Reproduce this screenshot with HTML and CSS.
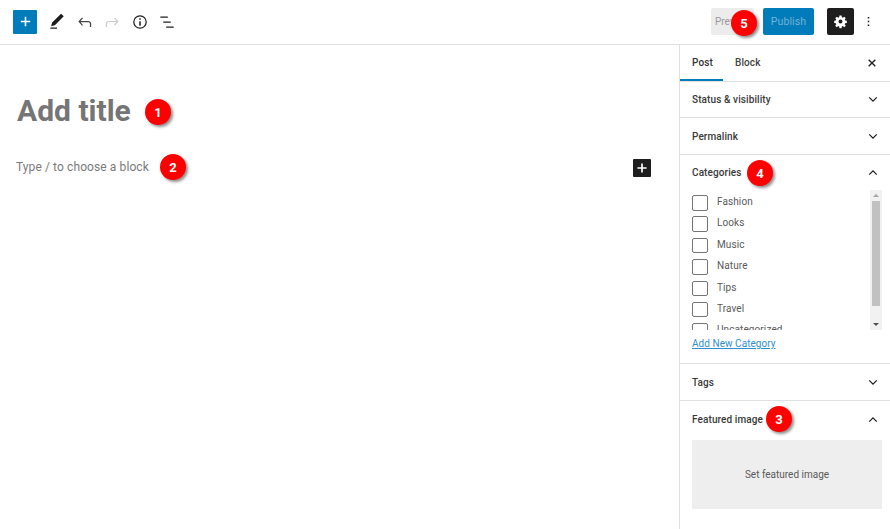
FILE: index.html
```html
<!DOCTYPE html>
<html lang="en">
<head>
<meta charset="utf-8">
<title>Add title</title>
<link rel="stylesheet" href="styles.css">
</head>
<body>
<div class="app">
  <header class="topbar">
    <div class="tools">
      <button class="add-btn" aria-label="Add block"><svg width="11" height="11" viewBox="0 0 14 14"><path d="M6 1h2v5h5v2H8v5H6V8H1V6h5z" fill="#fff"/></svg></button>
      <svg class="tool" width="20" height="20" viewBox="0 0 24 24"><path d="M20.100 5.100 16.900 2 6.200 12.700l-1.300 4.400 4.500-1.300zM4 20.200h8v-1.500H4z" fill="#1e1e1e"/></svg>
      <svg class="tool" width="20" height="20" viewBox="0 0 24 24"><path d="M18.300 11.700c-.6-.6-1.400-.9-2.300-.9H6.700l2.900-3.300-1.100-1-4.500 5L8.500 16.500l1-1-2.700-3.200H16c.5 0 .9.200 1.300.5.400.4.600.9.600 1.500V18h1.500v-3.900c0-1-.4-1.800-1.100-2.400z" fill="#444"/></svg>
      <svg class="tool" width="20" height="20" viewBox="0 0 24 24"><path d="M15.600 6.500l-1.100 1 2.900 3.300H8c-.9 0-1.700.3-2.300.9-.7.600-1.100 1.400-1.100 2.400V18h1.500v-3.900c0-.6.200-1.100.6-1.500.4-.3.800-.5 1.300-.5h9.200l-2.700 3.200 1 1 4.500-5z" fill="#ccc"/></svg>
      <svg class="tool" width="20" height="20" viewBox="0 0 24 24"><path d="M12 3.800a8.200 8.200 0 1 0 0 16.400 8.200 8.200 0 0 0 0-16.400zm0 14.900a6.700 6.700 0 1 1 0-13.400 6.700 6.700 0 0 1 0 13.400zM11.100 11h1.800v5.500h-1.800zm0-3.500h1.800v1.800h-1.800z" fill="#1e1e1e"/></svg>
      <svg class="tool" width="20" height="20" viewBox="0 0 24 24"><path d="M4 5.500h9V7H4zM7.500 11.500h9V13h-9zM11 17.500h9V19h-9z" fill="#1e1e1e"/></svg>
    </div>
    <div class="actions">
      <button class="preview">Preview</button>
      <button class="publish">Publish</button>
      <button class="settings" aria-label="Settings"><svg width="15" height="15" viewBox="0 0 24 24"><path fill="#fff" fill-rule="evenodd" d="M10.300 2.500h3.400l.5 2.700 1.500.6 2.300-1.600 2.400 2.400-1.600 2.300.6 1.500 2.700.5v3.400l-2.700.5-.6 1.500 1.600 2.300-2.400 2.400-2.300-1.600-1.500.6-.5 2.700h-3.400l-.5-2.700-1.500-.6-2.300 1.600-2.400-2.400 1.600-2.300-.6-1.500-2.700-.5v-3.400l2.700-.5.600-1.500-1.600-2.300 2.400-2.400 2.300 1.600 1.500-.6zM12 8.800a3.200 3.200 0 1 0 0 6.400 3.200 3.200 0 0 0 0-6.400z"/></svg></button>
      <svg class="more" width="3" height="11" viewBox="0 0 4 14"><path d="M1 1h2v2H1zM1 6h2v2H1zM1 11h2v2H1z" fill="#1e1e1e"/></svg>
    </div>
  </header>
  <div class="workspace">
    <main class="editor">
      <h1 class="title">Add title</h1>
      <div class="block-row">
        <p class="placeholder">Type / to choose a block</p>
        <button class="inline-add" aria-label="Add block"><svg width="10" height="10" viewBox="0 0 12 12"><path d="M5 .5h2V5h4.500v2H7v4.500H5V7H.5V5H5z" fill="#fff"/></svg></button>
      </div>
    </main>
    <aside class="sidebar">
      <div class="tabs">
        <span class="tab active">Post</span>
        <span class="tab">Block</span>
        <svg class="close" width="10" height="10" viewBox="0 0 12 12"><path d="M2 2l8 8M10 2l-8 8" stroke="#1e1e1e" stroke-width="1.600" fill="none"/></svg>
      </div>
      <section class="panel">
        <div class="panel-head short"><span>Status &amp; visibility</span><svg class="chev" width="10" height="7" viewBox="0 0 12 8"><path d="M1.500 1.500 6 6l4.500-4.500" stroke="#1e1e1e" stroke-width="1.500" fill="none"/></svg></div>
      </section>
      <section class="panel">
        <div class="panel-head"><span>Permalink</span><svg class="chev" width="10" height="7" viewBox="0 0 12 8"><path d="M1.500 1.500 6 6l4.500-4.500" stroke="#1e1e1e" stroke-width="1.500" fill="none"/></svg></div>
      </section>
      <section class="panel">
        <div class="panel-head short"><span>Categories</span><svg class="chev" width="10" height="7" viewBox="0 0 12 8"><path d="M1.500 6.500 6 2l4.500 4.500" stroke="#1e1e1e" stroke-width="1.500" fill="none"/></svg></div>
        <div class="cat-box">
          <ul class="cat-list">
            <li><i class="check"></i>Fashion</li>
            <li><i class="check"></i>Looks</li>
            <li><i class="check"></i>Music</li>
            <li><i class="check"></i>Nature</li>
            <li><i class="check"></i>Tips</li>
            <li><i class="check"></i>Travel</li>
            <li><i class="check"></i>Uncategorized</li>
          </ul>
          <div class="scrollbar">
            <svg width="10" height="11" viewBox="0 0 10 11"><path d="M5 4l3 3H2z" fill="#a3a3a3"/></svg>
            <div class="thumb"></div>
            <svg class="arrow-down" width="10" height="11" viewBox="0 0 10 11"><path d="M2 4h6L5 7z" fill="#505050"/></svg>
          </div>
        </div>
        <a class="add-cat">Add New Category</a>
      </section>
      <section class="panel">
        <div class="panel-head"><span>Tags</span><svg class="chev" width="10" height="7" viewBox="0 0 12 8"><path d="M1.500 1.500 6 6l4.500-4.500" stroke="#1e1e1e" stroke-width="1.500" fill="none"/></svg></div>
      </section>
      <section class="panel featured">
        <div class="panel-head"><span>Featured image</span><svg class="chev" width="10" height="7" viewBox="0 0 12 8"><path d="M1.500 6.500 6 2l4.500 4.500" stroke="#1e1e1e" stroke-width="1.500" fill="none"/></svg></div>
        <div class="set-image">Set featured image</div>
      </section>
    </aside>
  </div>
  <span class="badge b1">1</span>
  <span class="badge b2">2</span>
  <span class="badge b3">3</span>
  <span class="badge b4">4</span>
  <span class="badge b5">5</span>
</div>
</body>
</html>
```
FILE: styles.css
```css
* { box-sizing: border-box; }
html, body { margin: 0; height: 100%; overflow: hidden; background: #fff; }
body { font-family: Roboto, "Liberation Sans", sans-serif; color: #1e1e1e; }
button { border: 0; padding: 0; font: inherit; }
.app { position: relative; width: 890px; height: 529px; display: flex; flex-direction: column; }

.topbar { height: 45px; flex: none; border-bottom: 1px solid #e0e0e0; display: flex; justify-content: space-between; align-items: center; padding: 0 20.500px 1px 13px; }
.tools { display: flex; align-items: center; }
.add-btn { width: 24px; height: 24px; background: #007cba; border-radius: 1px; display: flex; align-items: center; justify-content: center; margin-right: 10px; }
.tool { margin-right: 7.600px; display: block; }
.actions { display: flex; align-items: center; }
.preview { width: 43px; height: 27px; background: #ececec; color: #9a9a9a; font-size: 10px; border-radius: 2px; margin-right: 9px; text-align: left; padding-left: 4px; }
.publish { width: 51px; height: 27px; background: #007cba; color: #74b2d8; font-size: 10.500px; letter-spacing: .1px; border-radius: 2px; margin-right: 13px; }
.settings { width: 27px; height: 27px; background: #1e1e1e; border-radius: 2px; display: flex; align-items: center; justify-content: center; margin-right: 12.500px; }
.more { display: block; }

.workspace { flex: 1; display: flex; min-height: 0; }
.editor { flex: 1; padding: 47px 28px 0 16px; }
.title { margin: 0 0 0 1px; font-size: 30px; line-height: 38px; font-weight: 700; color: #757575; }
.block-row { margin-top: 27px; display: flex; justify-content: space-between; align-items: center; height: 20px; }
.placeholder { margin: 0; font-size: 12px; color: #7a7a7a; letter-spacing: .1px; }
.inline-add { width: 18px; height: 18px; margin-top: 2px; background: #1e1e1e; border-radius: 1px; display: flex; align-items: center; justify-content: center; }

.sidebar { width: 211px; flex: none; border-left: 1px solid #e0e0e0; }
.tabs { height: 37px; border-bottom: 1px solid #e0e0e0; display: flex; align-items: stretch; position: relative; }
.tab { width: 43px; font-size: 10px; font-weight: 500; letter-spacing: .1px; line-height: 36px; padding-left: 12px; color: #444; }
.tab.active { border-bottom: 2px solid #007cba; color: #333; }
.tab + .tab { width: auto; }
.close { position: absolute; right: 13px; top: 13px; }
.panel { border-bottom: 1px solid #e0e0e0; }
.panel-head { height: 36px; padding: 0 12.500px 0 12px; display: flex; justify-content: space-between; align-items: center; font-size: 10px; font-weight: 500; letter-spacing: .1px; color: #3a3a3a; }
.panel-head.short { height: 35px; }
.cat-box { margin: 0 8px 0 12px; height: 140px; display: flex; justify-content: space-between; overflow: hidden; }
.cat-list { list-style: none; margin: 0; padding: 5px 0 0; font-size: 10px; letter-spacing: .1px; color: #5a5a5a; }
.cat-list li { height: 21.400px; display: flex; align-items: flex-start; line-height: 14px; }
.check { width: 15.500px; height: 15.500px; border: 1px solid #757575; border-radius: 2px; margin-right: 9.500px; }
.scrollbar { width: 12px; background: #f1f1f1; display: flex; flex-direction: column; }
.scrollbar svg { flex: none; display: block; margin: 0 auto; }
.thumb { height: 105px; background: #c1c1c1; margin: 0 2px; }
.scrollbar .arrow-down { margin-top: auto; }
.add-cat { display: block; margin: 8px 12px 0; height: 25px; font-size: 10px; letter-spacing: .05px; color: #2e8fd0; text-decoration: underline; }
.featured { border-bottom: 0; }
.set-image { margin: 3px 8px 0 12px; height: 69px; background: #eee; display: flex; align-items: center; justify-content: center; font-size: 10px; color: #5a5a5a; }

.badge { position: absolute; width: 26px; height: 26px; border-radius: 50%; background: #f00; color: #fff; font-size: 13px; font-weight: 700; display: flex; align-items: center; justify-content: center; box-shadow: 2px 2px 3px rgba(0,0,0,.45); }
.b1 { left: 145px; top: 99px; }
.b2 { left: 160px; top: 154px; }
.b3 { left: 766px; top: 406px; }
.b4 { left: 747px; top: 160px; }
.b5 { left: 731px; top: 10px; }
```
